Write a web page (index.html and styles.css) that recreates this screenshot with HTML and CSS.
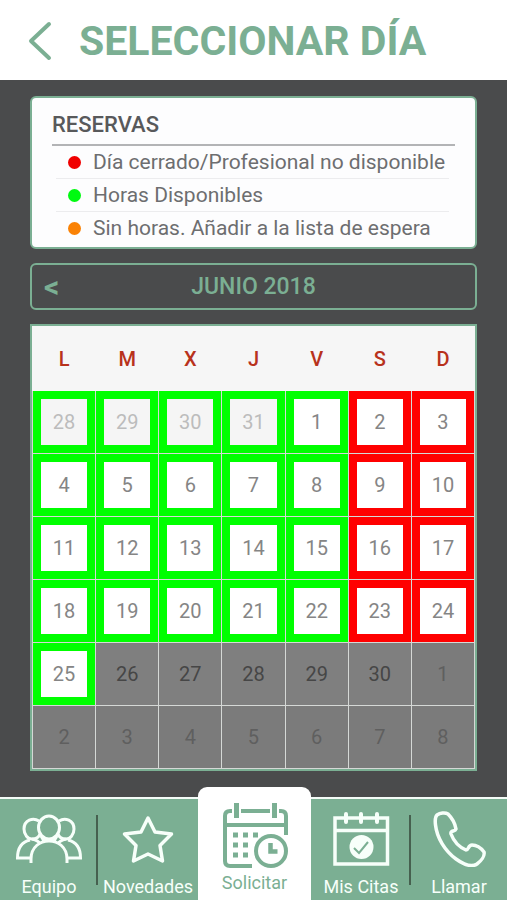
FILE: index.html
```html
<!DOCTYPE html>
<html lang="es">
<head>
<meta charset="utf-8">
<meta name="viewport" content="width=device-width, initial-scale=1">
<title>Seleccionar día</title>
<link rel="stylesheet" href="styles.css">
</head>
<body>
<header class="header">
  <button class="back" type="button" aria-label="Volver">
    <svg width="24" height="40" viewBox="0 0 24 40"><path d="M21 3 3 20l18 17"/></svg>
  </button>
  <h1 class="title">SELECCIONAR DÍA</h1>
</header>

<main class="content">
  <section class="legend">
    <h2 class="legend-title">RESERVAS</h2>
    <ul class="legend-list">
      <li><span class="dot dot-closed"></span>Día cerrado/Profesional no disponible</li>
      <li><span class="dot dot-open"></span>Horas Disponibles</li>
      <li><span class="dot dot-wait"></span>Sin horas. Añadir a la lista de espera</li>
    </ul>
  </section>

  <div class="month">
    <button class="month-prev" type="button" aria-label="Mes anterior">&lt;</button>
    <span class="month-name">JUNIO 2018</span>
  </div>

  <table class="calendar">
    <thead>
      <tr><th>L</th><th>M</th><th>X</th><th>J</th><th>V</th><th>S</th><th>D</th></tr>
    </thead>
    <tbody>
      <tr>
        <td><button class="day open other">28</button></td><td><button class="day open other">29</button></td><td><button class="day open other">30</button></td><td><button class="day open other">31</button></td><td><button class="day open">1</button></td><td><button class="day closed">2</button></td><td><button class="day closed">3</button></td>
      </tr>
      <tr>
        <td><button class="day open">4</button></td><td><button class="day open">5</button></td><td><button class="day open">6</button></td><td><button class="day open">7</button></td><td><button class="day open">8</button></td><td><button class="day closed">9</button></td><td><button class="day closed">10</button></td>
      </tr>
      <tr>
        <td><button class="day open">11</button></td><td><button class="day open">12</button></td><td><button class="day open">13</button></td><td><button class="day open">14</button></td><td><button class="day open">15</button></td><td><button class="day closed">16</button></td><td><button class="day closed">17</button></td>
      </tr>
      <tr>
        <td><button class="day open">18</button></td><td><button class="day open">19</button></td><td><button class="day open">20</button></td><td><button class="day open">21</button></td><td><button class="day open">22</button></td><td><button class="day closed">23</button></td><td><button class="day closed">24</button></td>
      </tr>
      <tr>
        <td><button class="day open">25</button></td><td><button class="day off" disabled>26</button></td><td><button class="day off" disabled>27</button></td><td><button class="day off" disabled>28</button></td><td><button class="day off" disabled>29</button></td><td><button class="day off" disabled>30</button></td><td><button class="day off next" disabled>1</button></td>
      </tr>
      <tr>
        <td><button class="day off next" disabled>2</button></td><td><button class="day off next" disabled>3</button></td><td><button class="day off next" disabled>4</button></td><td><button class="day off next" disabled>5</button></td><td><button class="day off next" disabled>6</button></td><td><button class="day off next" disabled>7</button></td><td><button class="day off next" disabled>8</button></td>
      </tr>
    </tbody>
  </table>
</main>

<nav class="tabs">
  <a class="tab divided" href="#equipo">
    <svg width="68" height="56" viewBox="0 0 68 56" fill="none" stroke="currentColor" stroke-width="3">
      <ellipse cx="34" cy="16.500" rx="10.500" ry="11.500"/>
      <path d="M24 10C18 6 9 9 9 18c0 6 4 10 8 10 4 0 7-2 8-5M44 10c6-4 15-1 15 8 0 6-4 10-8 10-4 0-7-2-8-5"/>
      <path d="M16 52v-4c0-24 36-24 36 0v4M17 47H2.500c0-9 4-16 12.500-18M51 47h14.500c0-9-4-16-12.500-18M17 28c4 1 7 2 8 5M51 28c-4 1-7 2-8 5M26 25l3 5M42 25l-3 5"/>
    </svg>
    <span>Equipo</span>
  </a>
  <a class="tab" href="#novedades">
    <svg width="68" height="56" viewBox="0 0 68 56" fill="none" stroke="currentColor" stroke-width="3.500" stroke-linejoin="round">
      <path d="M34 7l7 14 16.500 2-11.500 11.500L48.500 50 34 43 19.500 50 22 34.500 10.500 23 27 21z"/>
    </svg>
    <span>Novedades</span>
  </a>
  <a class="tab active" href="#solicitar" aria-current="page">
    <svg width="68" height="68" viewBox="0 0 68 68" fill="none" stroke="currentColor">
      <path stroke-width="5" d="M15.500 0v15M53.500 0v15"/>
      <path stroke-width="4" d="M20 8h29M11 8H9q-5 0-5 5v45q0 5 5 5h22M58 8h2q5 0 5 5v19M4 22h61"/>
      <path stroke-width="5" stroke-dasharray="5 5" d="M12 32h26M12 42h16M12 52h16"/>
      <circle cx="50" cy="48" r="15" stroke-width="4"/>
      <path stroke-width="4.500" d="M49.500 40v8.500h7"/>
    </svg>
    <span>Solicitar</span>
  </a>
  <a class="tab divided" href="#citas">
    <svg width="68" height="56" viewBox="0 0 68 56" fill="none" stroke="currentColor" stroke-width="3.500">
      <path d="M8 7h52.500v46H8zM8 19.500h52.500"/>
      <path stroke-width="4" stroke-linecap="round" d="M19 3v8M34 3v8M50 3v8"/>
      <circle cx="34.500" cy="36" r="12" fill="currentColor" stroke="none"/>
      <path class="check" stroke-width="2" d="M27 37l5 5 9-11"/>
    </svg>
    <span>Mis Citas</span>
  </a>
  <a class="tab" href="#llamar">
    <svg width="68" height="56" viewBox="0 0 68 56" fill="none" stroke="currentColor" stroke-width="3.500" stroke-linejoin="round">
      <path d="M12 4C15 2 20 1 23 3c4 4 7 9 8 15-1 3-6 1-5 5 3 8 8 13 15 16 3 0 2-5 6-5 5 0 9 3 12 7 1 4-3 9-7 12-6 4-14 0-21-5C20 40 12 27 10.500 14 10 10 10 6 12 4z"/>
    </svg>
    <span>Llamar</span>
  </a>
</nav>
</body>
</html>
```
FILE: styles.css
```css
* {
  box-sizing: border-box;
}

:root {
  --green: #7baf93;
  --dark: #4a4b4c;
}

body {
  margin: 0;
  min-height: 100vh;
  display: flex;
  flex-direction: column;
  background: var(--dark);
  font-family: Roboto, "Liberation Sans", sans-serif;
  color: #6d6e70;
}

button {
  font-family: inherit;
  padding: 0;
  border: 0;
  background: none;
}

.header {
  display: flex;
  align-items: center;
  gap: 27px;
  height: 80px;
  padding: 2px 28px 0;
  background: #fff;
}

.back {
  display: flex;
}

.back svg {
  fill: none;
  stroke: var(--green);
  stroke-width: 4;
  stroke-linecap: round;
  stroke-linejoin: round;
}

.title {
  margin: 0;
  font-size: 41px;
  line-height: 48px;
  font-weight: 700;
  color: var(--green);
}

.content {
  flex: 1;
  display: flex;
  flex-direction: column;
  gap: 14px;
  padding: 16px 30px;
}

.legend {
  padding: 14px 20px 3px;
  border: 2px solid var(--green);
  border-radius: 6px;
  background: #fdfdfe;
}

.legend-title {
  margin: 0;
  padding-bottom: 6px;
  border-bottom: 2px solid #b3b4b6;
  font-size: 22px;
  line-height: 26px;
  font-weight: 500;
  color: #58595b;
}

.legend-list {
  margin: 0;
  padding: 0 6px 0 4px;
  list-style: none;
  font-size: 21px;
  line-height: 32px;
}

.legend-list li {
  display: flex;
  align-items: center;
  gap: 12px;
  padding-left: 12px;
  white-space: nowrap;
}

.legend-list li + li {
  border-top: 1px solid #ececee;
}

.dot {
  flex: none;
  width: 13px;
  height: 13px;
  border-radius: 50%;
}

.dot-closed {
  background: #f00000;
}

.dot-open {
  background: #00fa10;
}

.dot-wait {
  background: #fa8205;
}

.month {
  display: grid;
  grid-template-columns: 1fr auto 1fr;
  align-items: center;
  height: 47px;
  padding: 0 12px;
  border: 2px solid var(--green);
  border-radius: 6px;
  color: var(--green);
  font-size: 23px;
}

.month-name {
  font-weight: 500;
}

.month-prev {
  justify-self: start;
  color: inherit;
  font-size: 30px;
  line-height: 30px;
  font-weight: 700;
}

.calendar {
  width: 100%;
  table-layout: fixed;
  border: 2px solid var(--green);
  border-collapse: separate;
  border-spacing: 1px;
  background: #d5d8d6;
}

.calendar th {
  height: 63px;
  padding: 0;
  background: #f6f6f6;
  box-shadow: 0 0 0 1px #f6f6f6;
  font-size: 20px;
  font-weight: 500;
  color: #b8321c;
}

.calendar td {
  position: relative;
  padding: 0;
}

.day {
  display: block;
  width: 100%;
  height: 62px;
  border: 8px solid transparent;
  background: #fff;
  font-size: 20px;
  color: #858585;
}

.open {
  border-color: #00ff00;
}

.closed {
  border-color: #ff0000;
}

.other {
  background: #f5f5f5;
  color: #bcbcbc;
}

.off {
  background: #7f7f7f;
  color: #464646;
}

.next {
  background: #7b7b7b;
  color: #5f5f5f;
}

.tabs {
  display: grid;
  grid-template-columns: 98fr 100fr 113fr 100fr 96fr;
  align-items: end;
  height: 103px;
  border-top: 2px solid #f4fbf7;
  background: var(--green);
}

.tab {
  position: relative;
  display: flex;
  flex-direction: column;
  align-items: center;
  gap: 9px;
  padding-bottom: 3px;
  font-size: 18px;
  line-height: 21px;
  color: #f7fffa;
  text-decoration: none;
  white-space: nowrap;
}

.divided::after {
  content: "";
  position: absolute;
  right: 0;
  bottom: 15px;
  width: 2px;
  height: 70px;
  background: #46604f;
}

.active {
  gap: 1px;
  height: 113px;
  margin-top: -12px;
  padding: 16px 0 0;
  border-radius: 9px 9px 0 0;
  background: #fff;
  color: var(--green);
}

.check {
  stroke: var(--green);
}
```
